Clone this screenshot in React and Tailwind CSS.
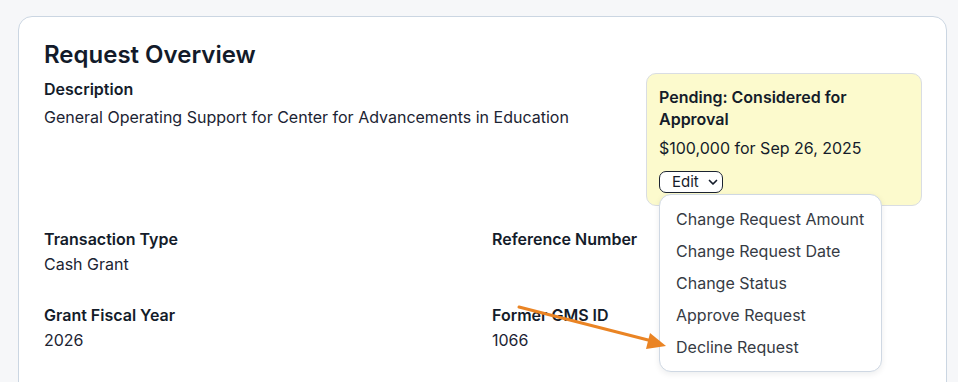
import React from "react";

function Field({ label, value }) {
  return (
    <div>
      <div className="text-[16px] leading-[20px] font-semibold text-[#141c2a] mb-[3px]">{label}</div>
      <div className="text-[16px] leading-[24px] text-[#1c2433] min-h-[24px]">{value}</div>
    </div>
  );
}

export default function App() {
  const items = [
    "Change Request Amount",
    "Change Request Date",
    "Change Status",
    "Approve Request",
    "Decline Request",
  ];
  return (
    <div
      className="relative w-[958px] h-[382px] overflow-hidden bg-[#f6f7f9] pt-4 pl-[18px] pr-[11px]"
      style={{ fontFamily: "Inter, 'Noto Sans', sans-serif" }}
    >
      <div className="h-[420px] rounded-[14px] border border-[#cbd6e2] bg-white pl-[25px] pr-6 pt-[24px]">
        <h2 className="text-[24px] leading-[28px] font-semibold text-[#131b2a]">Request Overview</h2>
        <div className="mt-1 flex items-start justify-between">
          <div className="pt-[6px]">
            <div className="text-[16px] leading-[20px] font-semibold text-[#141c2a] mb-[6px]">Description</div>
            <div className="text-[16px] leading-[24px] text-[#1c2433]">
              General Operating Support for Center for Advancements in Education
            </div>
          </div>
          <div className="relative w-[276px] shrink-0 rounded-[10px] border border-[#d9dde3] bg-[#fcfacd] px-3 pt-[12px] pb-[12px]">
            <div className="text-[16px] leading-[22px] font-semibold text-[#141c2a]">
              Pending: Considered for
              <br />
              Approval
            </div>
            <div className="mt-[7px] text-[16px] leading-[22px] text-[#141c2a]">$100,000 for Sep 26, 2025</div>
            <div className="relative mt-[12px] w-fit">
              <button className="flex h-[22px] w-[64px] items-center gap-[9px] rounded-[7px] border border-[#1b2331] bg-white pl-[12px] text-[15px] text-[#141c2a]">
                Edit
                <svg width="10" height="7" viewBox="0 0 10 7" fill="none">
                  <path d="M1.5 1.5 L5 5 L8.5 1.5" stroke="#141c2a" strokeWidth="1.7" strokeLinecap="round" strokeLinejoin="round" />
                </svg>
              </button>
              <div className="absolute left-0 top-[23px] z-10 w-[223px] rounded-[12px] border border-[#cfd8e3] bg-white py-2 shadow-[0_2px_6px_rgba(15,23,42,0.08)]">
                {items.map((it) => (
                  <div key={it} className="h-8 whitespace-nowrap px-4 text-[16px] leading-[32px] text-[#363b44]">
                    {it}
                  </div>
                ))}
              </div>
            </div>
          </div>
        </div>
        <div className="mt-[23px] grid grid-cols-[448px_1fr] gap-y-[29px]">
          <Field label="Transaction Type" value="Cash Grant" />
          <Field label="Reference Number" value="" />
          <Field label="Grant Fiscal Year" value="2026" />
          <Field label="Former GMS ID" value="1066" />
        </div>
      </div>
      <svg className="pointer-events-none absolute left-0 top-0 z-20" width="958" height="382" viewBox="0 0 958 382">
        <line x1="519" y1="307" x2="652" y2="341" stroke="#ea8424" strokeWidth="3" strokeLinecap="round" />
        <polygon points="666,346 650,333 646,349" fill="#ea8424" />
      </svg>
    </div>
  );
}
